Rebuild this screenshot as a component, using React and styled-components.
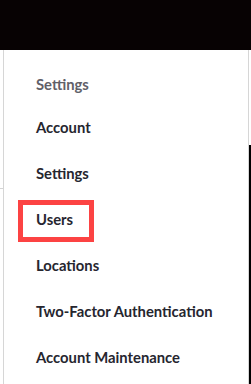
import React from 'react';
import styled, { createGlobalStyle } from 'styled-components';

const GlobalStyle = createGlobalStyle`
  html, body {
    margin: 0;
    padding: 0;
    background: #ffffff;
  }
  body {
    font-family: Lato, "Open Sans", Arial, sans-serif;
  }
`;

const Header = styled.header`
  height: 50px;
  background: #070203;
`;

const Stage = styled.div`
  display: flex;
  height: 334px;
`;

const LeftGutter = styled.div`
  width: 3px;
  padding-top: 138px;
`;

const GutterLine = styled.div`
  border-top: 1px solid #d4d4d4;
`;

const RightGutter = styled.div`
  width: 2px;
  display: flex;
  flex-direction: column;
  padding-top: 95px;
`;

const RightBar = styled.div`
  flex: 1;
  background: #000000;
`;

const Menu = styled.nav`
  width: 244px;
  border-left: 1px solid #d6d6d6;
  border-right: 1px solid #d6d6d6;
  padding-top: 24px;
  background: #ffffff;
  overflow: hidden;
`;

const Heading = styled.div`
  padding-left: 32px;
  line-height: 20px;
  margin-bottom: 10px;
  font-size: 14.8px;
  font-weight: 700;
  color: #606068;
`;

const Item = styled.a`
  position: relative;
  display: flex;
  align-items: center;
  height: 46px;
  padding-left: 32px;
  font-size: 14.8px;
  font-weight: 700;
  color: #26262f;
  text-decoration: none;
`;

const Highlight = styled.span`
  position: absolute;
  left: 14px;
  top: 4px;
  width: 76px;
  height: 42px;
  box-sizing: border-box;
  border: 5px solid #fc4343;
  pointer-events: none;
`;

const items = [
  'Account',
  'Settings',
  'Users',
  'Locations',
  'Two-Factor Authentication',
  'Account Maintenance',
];

export default function App() {
  return (
    <>
      <GlobalStyle />
      <Header />
      <Stage>
        <LeftGutter>
          <GutterLine />
        </LeftGutter>
        <Menu>
          <Heading>Settings</Heading>
          {items.map((label) => (
            <Item key={label} href="#">
              {label}
              {label === 'Users' && <Highlight />}
            </Item>
          ))}
        </Menu>
        <RightGutter>
          <RightBar />
        </RightGutter>
      </Stage>
    </>
  );
}
